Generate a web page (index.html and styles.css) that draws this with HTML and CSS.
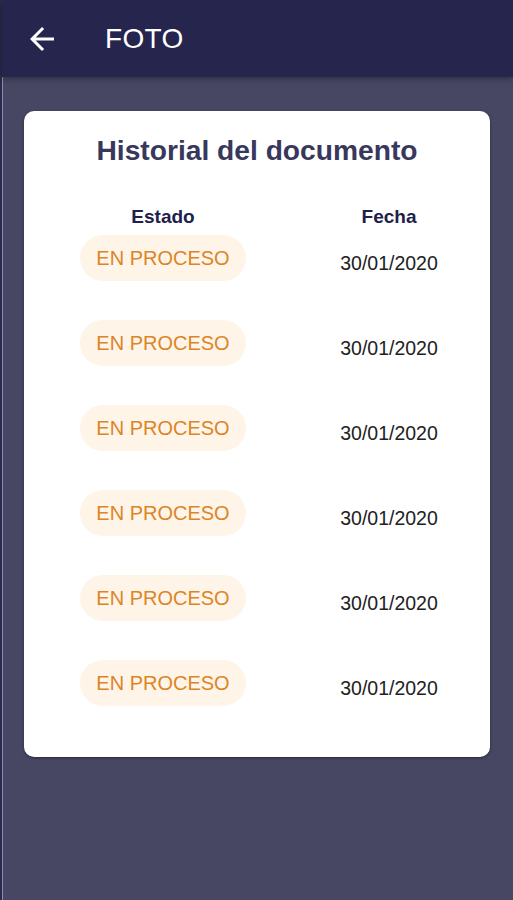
FILE: index.html
```html
<!DOCTYPE html>
<html lang="es">

<head>
    <meta charset="UTF-8">
    <title>Foto</title>
    <link rel="stylesheet" href="styles.css">
</head>

<body>
    <div class="screen">
        <header class="topbar">
            <button class="back" aria-label="Volver">
                <svg viewBox="0 0 24 24" width="36" height="36">
                    <path fill="#fff" d="M20 11H7.83l5.59-5.59L12 4l-8 8 8 8 1.41-1.41L7.83 13H20v-2z"/>
                </svg>
            </button>
            <h1>FOTO</h1>
        </header>
        <main>
            <section class="card">
                <h2>Historial del documento</h2>
                <div class="history-head">
                    <div class="head">Estado</div>
                    <div class="head">Fecha</div>
                </div>
                <div class="history">
                    <div class="status">EN PROCESO</div>
                    <div class="date">30/01/2020</div>

                    <div class="status">EN PROCESO</div>
                    <div class="date">30/01/2020</div>

                    <div class="status">EN PROCESO</div>
                    <div class="date">30/01/2020</div>

                    <div class="status">EN PROCESO</div>
                    <div class="date">30/01/2020</div>

                    <div class="status">EN PROCESO</div>
                    <div class="date">30/01/2020</div>

                    <div class="status">EN PROCESO</div>
                    <div class="date">30/01/2020</div>
                </div>
            </section>
        </main>
    </div>
</body>

</html>
```

FILE: styles.css
```css
* {
    margin: 0;
    padding: 0;
    box-sizing: border-box;
}

body {
    background-color: #474763;
    font-family: "Liberation Sans", Arial, sans-serif;
}

.screen {
    min-height: 900px;
    border-left: 2px solid #2a2a4c;
    box-shadow: inset 1px 0 0 #8e8eac;
}

.topbar {
    height: 77px;
    background-color: #25254e;
    display: flex;
    align-items: center;
    padding-left: 22px;
    box-shadow: 0 2px 6px rgba(0, 0, 0, 0.35);
}

.back {
    background: none;
    border: none;
    width: 36px;
    height: 36px;
    display: flex;
    margin-top: 1px;
}

.topbar h1 {
    color: #fff;
    font-size: 28px;
    font-weight: normal;
    margin-left: 45px;
    letter-spacing: 0.3px;
}

main {
    padding: 34px 23px 0 22px;
}

.card {
    background-color: #fff;
    border-radius: 10px;
    box-shadow: 0 1px 3px rgba(0, 0, 0, 0.45);
    padding: 22px 0 51px 56px;
}

.card h2 {
    text-align: center;
    margin-left: -56px;
    font-size: 28.2px;
    line-height: 34px;
    color: #38385c;
}

.history-head,
.history {
    display: grid;
    grid-template-columns: 166px 150px;
    column-gap: 68px;
}

.history-head {
    margin-top: 39px;
    margin-bottom: 7px;
}

.history {
    row-gap: 39px;
}

.head {
    text-align: center;
    font-size: 19px;
    font-weight: bold;
    line-height: 22px;
    color: #20204a;
}

.status {
    height: 46px;
    border-radius: 23px;
    background-color: #fff4e8;
    color: #dd8526;
    font-size: 20px;
    display: flex;
    align-items: center;
    justify-content: center;
}

.date {
    text-align: center;
    font-size: 19.5px;
    line-height: 22px;
    padding-top: 17px;
    color: #222;
}
```
